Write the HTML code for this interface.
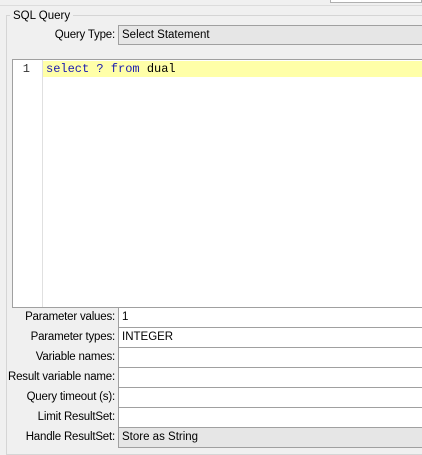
<!DOCTYPE html><html><head><style>
body{margin:0;width:422px;height:450px;background:#f0f0f0;position:relative;overflow:hidden;font-family:"Liberation Sans",sans-serif;font-size:12px;color:#000}
div{position:absolute;box-sizing:border-box}
.lab{right:307px;text-align:right;white-space:nowrap;height:20px;line-height:20px;font-size:11.5px;letter-spacing:-0.2px}
.f{left:118px;width:310px;height:21px;border:1px solid #a0a0a0;background:#fff;padding-left:3px;line-height:19px;font-size:11.5px}
.g{background:#e6e6e6}
</style></head><body>
<div style="left:0;top:5px;width:422px;height:1px;background:#dcdcdc"></div>
<div style="left:330px;top:0;width:92px;height:3px;border:1px solid #b0b0b0;border-top:none;background:#fff"></div>
<div style="left:6px;top:15px;width:420px;height:440px;border:1px solid #d5d5d5;border-right:none"></div>
<div style="left:10px;top:8px;padding:0 3px;background:#f0f0f0;line-height:16px;font-size:11.5px">SQL Query</div>
<div class="lab" style="top:25px">Query Type:</div>
<div class="f g" style="top:25px;height:20px">Select Statement</div>
<div style="left:12px;top:59px;width:415px;height:249px;border:1px solid #a0a0a0;background:#fff"></div>
<div style="left:42px;top:60px;width:1px;height:247px;background:#e0e0e0"></div>
<div style="left:43px;top:61px;width:380px;height:16px;background:#ffffa8"></div>
<div style="left:20px;top:61px;width:10px;text-align:right;font-family:'Liberation Mono',monospace;font-size:12px;line-height:16px;color:#333">1</div>
<div style="left:46px;top:61px;font-family:'Liberation Mono',monospace;font-size:12px;line-height:16px;white-space:pre"><span style="color:#1a1ab0">select ? from</span> dual</div>
<div class="lab" style="top:307px">Parameter values:</div><div class="f" style="top:307px">1</div>
<div class="lab" style="top:327px">Parameter types:</div><div class="f" style="top:327px">INTEGER</div>
<div class="lab" style="top:347px">Variable names:</div><div class="f" style="top:347px"></div>
<div class="lab" style="top:367px">Result variable name:</div><div class="f" style="top:367px"></div>
<div class="lab" style="top:387px">Query timeout (s):</div><div class="f" style="top:387px"></div>
<div class="lab" style="top:407px">Limit ResultSet:</div><div class="f" style="top:407px"></div>
<div class="lab" style="top:427px">Handle ResultSet:</div><div class="f g" style="top:427px">Store as String</div>
</body></html>
